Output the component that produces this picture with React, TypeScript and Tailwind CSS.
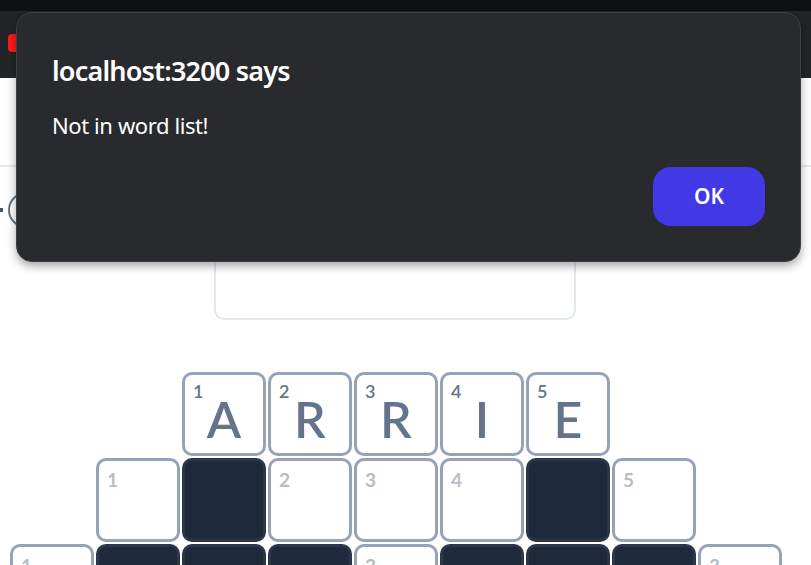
import React from "react";

type Cell = { kind: "empty" } | { kind: "white"; num?: number; letter?: string } | { kind: "dark" };

const rows: Cell[][] = [
    [
        { kind: "empty" },
        { kind: "empty" },
        { kind: "white", num: 1, letter: "A" },
        { kind: "white", num: 2, letter: "R" },
        { kind: "white", num: 3, letter: "R" },
        { kind: "white", num: 4, letter: "I" },
        { kind: "white", num: 5, letter: "E" },
        { kind: "empty" },
        { kind: "empty" },
    ],
    [
        { kind: "empty" },
        { kind: "white", num: 1 },
        { kind: "dark" },
        { kind: "white", num: 2 },
        { kind: "white", num: 3 },
        { kind: "white", num: 4 },
        { kind: "dark" },
        { kind: "white", num: 5 },
        { kind: "empty" },
    ],
    [
        { kind: "white", num: 1 },
        { kind: "dark" },
        { kind: "dark" },
        { kind: "dark" },
        { kind: "white", num: 2 },
        { kind: "dark" },
        { kind: "dark" },
        { kind: "dark" },
        { kind: "white", num: 3 },
    ],
];

const Tile: React.FC<{ cell: Cell; active: boolean }> = ({ cell, active }) => {
    if (cell.kind === "empty") return <div className="w-[84px] h-[84px]" />;
    if (cell.kind === "dark") {
        return <div className="w-[84px] h-[84px] rounded-[10px] bg-[#1e293b] border-[3px] border-[#2b3749]" />;
    }
    return (
        <div className="relative w-[84px] h-[84px] rounded-[10px] bg-white border-[3px] border-[#94a3b8]">
            {cell.num !== undefined && (
                active ? (
                    <span className="absolute left-[8px] top-[3px] text-[18px] font-semibold text-[#64748b]">{cell.num}</span>
                ) : (
                    <span className="absolute left-[8px] top-[5px] text-[19px] font-bold text-[#b6bdc8]">{cell.num}</span>
                )
            )}
            {cell.letter && (
                <div className="flex h-full items-center justify-center pt-[10px] text-[50px] font-semibold text-[#64748b]">
                    {cell.letter}
                </div>
            )}
        </div>
    );
};

const App: React.FC = () => {
    return (
        <div className="relative w-[811px] h-[565px] overflow-hidden bg-white" style={{ fontFamily: "Lato, 'Noto Sans', sans-serif" }}>
            <div className="h-[11px] bg-[#101115]" />
            <div className="h-[67px] bg-[#222427] flex items-center pl-[8px]">
                <div className="w-[20px] h-[18px] rounded-[4px] bg-[#ff1a1a] -mt-[4px]" />
            </div>
            <div className="h-[89px] border-b-2 border-[#e5e7eb]" />
            <div className="flex items-center h-[86px]">
                <div className="w-[3px] h-[4px] bg-[#475569] mr-[5px]" />
                <div className="w-[36px] h-[36px] rounded-full border-2 border-[#64748b]" />
            </div>
            <div className="flex justify-center pr-[21px]">
                <div className="w-[362px] h-[94px] -mt-[27px] rounded-[10px] border-2 border-[#e2e8f0]" />
            </div>
            <div className="pl-[10px] pt-[52px] flex flex-col gap-[2px]">
                {rows.map((row, r) => (
                    <div key={r} className="flex gap-[2px]">
                        {row.map((cell, c) => (
                            <Tile key={c} cell={cell} active={r === 0} />
                        ))}
                    </div>
                ))}
            </div>

            <div
                className="absolute left-[16px] top-[12px] w-[785px] h-[250px] rounded-[16px] bg-[#292a2d] border border-[#3f4044] shadow-[0_4px_10px_rgba(0,0,0,0.35)] px-[35px] pt-[41px]"
                style={{ fontFamily: "'Noto Sans', sans-serif" }}
            >
                <div className="text-[27px] font-semibold text-white leading-[34px] tracking-[-0.8px]">localhost:3200 says</div>
                <div className="mt-[22px] text-[22px] text-white leading-[30px] tracking-[-0.4px]">Not in word list!</div>
                <div className="flex justify-end mt-[27px]">
                    <button className="w-[112px] h-[59px] rounded-[18px] bg-[#4338e6] text-white text-[21px] font-semibold">OK</button>
                </div>
            </div>
        </div>
    );
};

export default App;
